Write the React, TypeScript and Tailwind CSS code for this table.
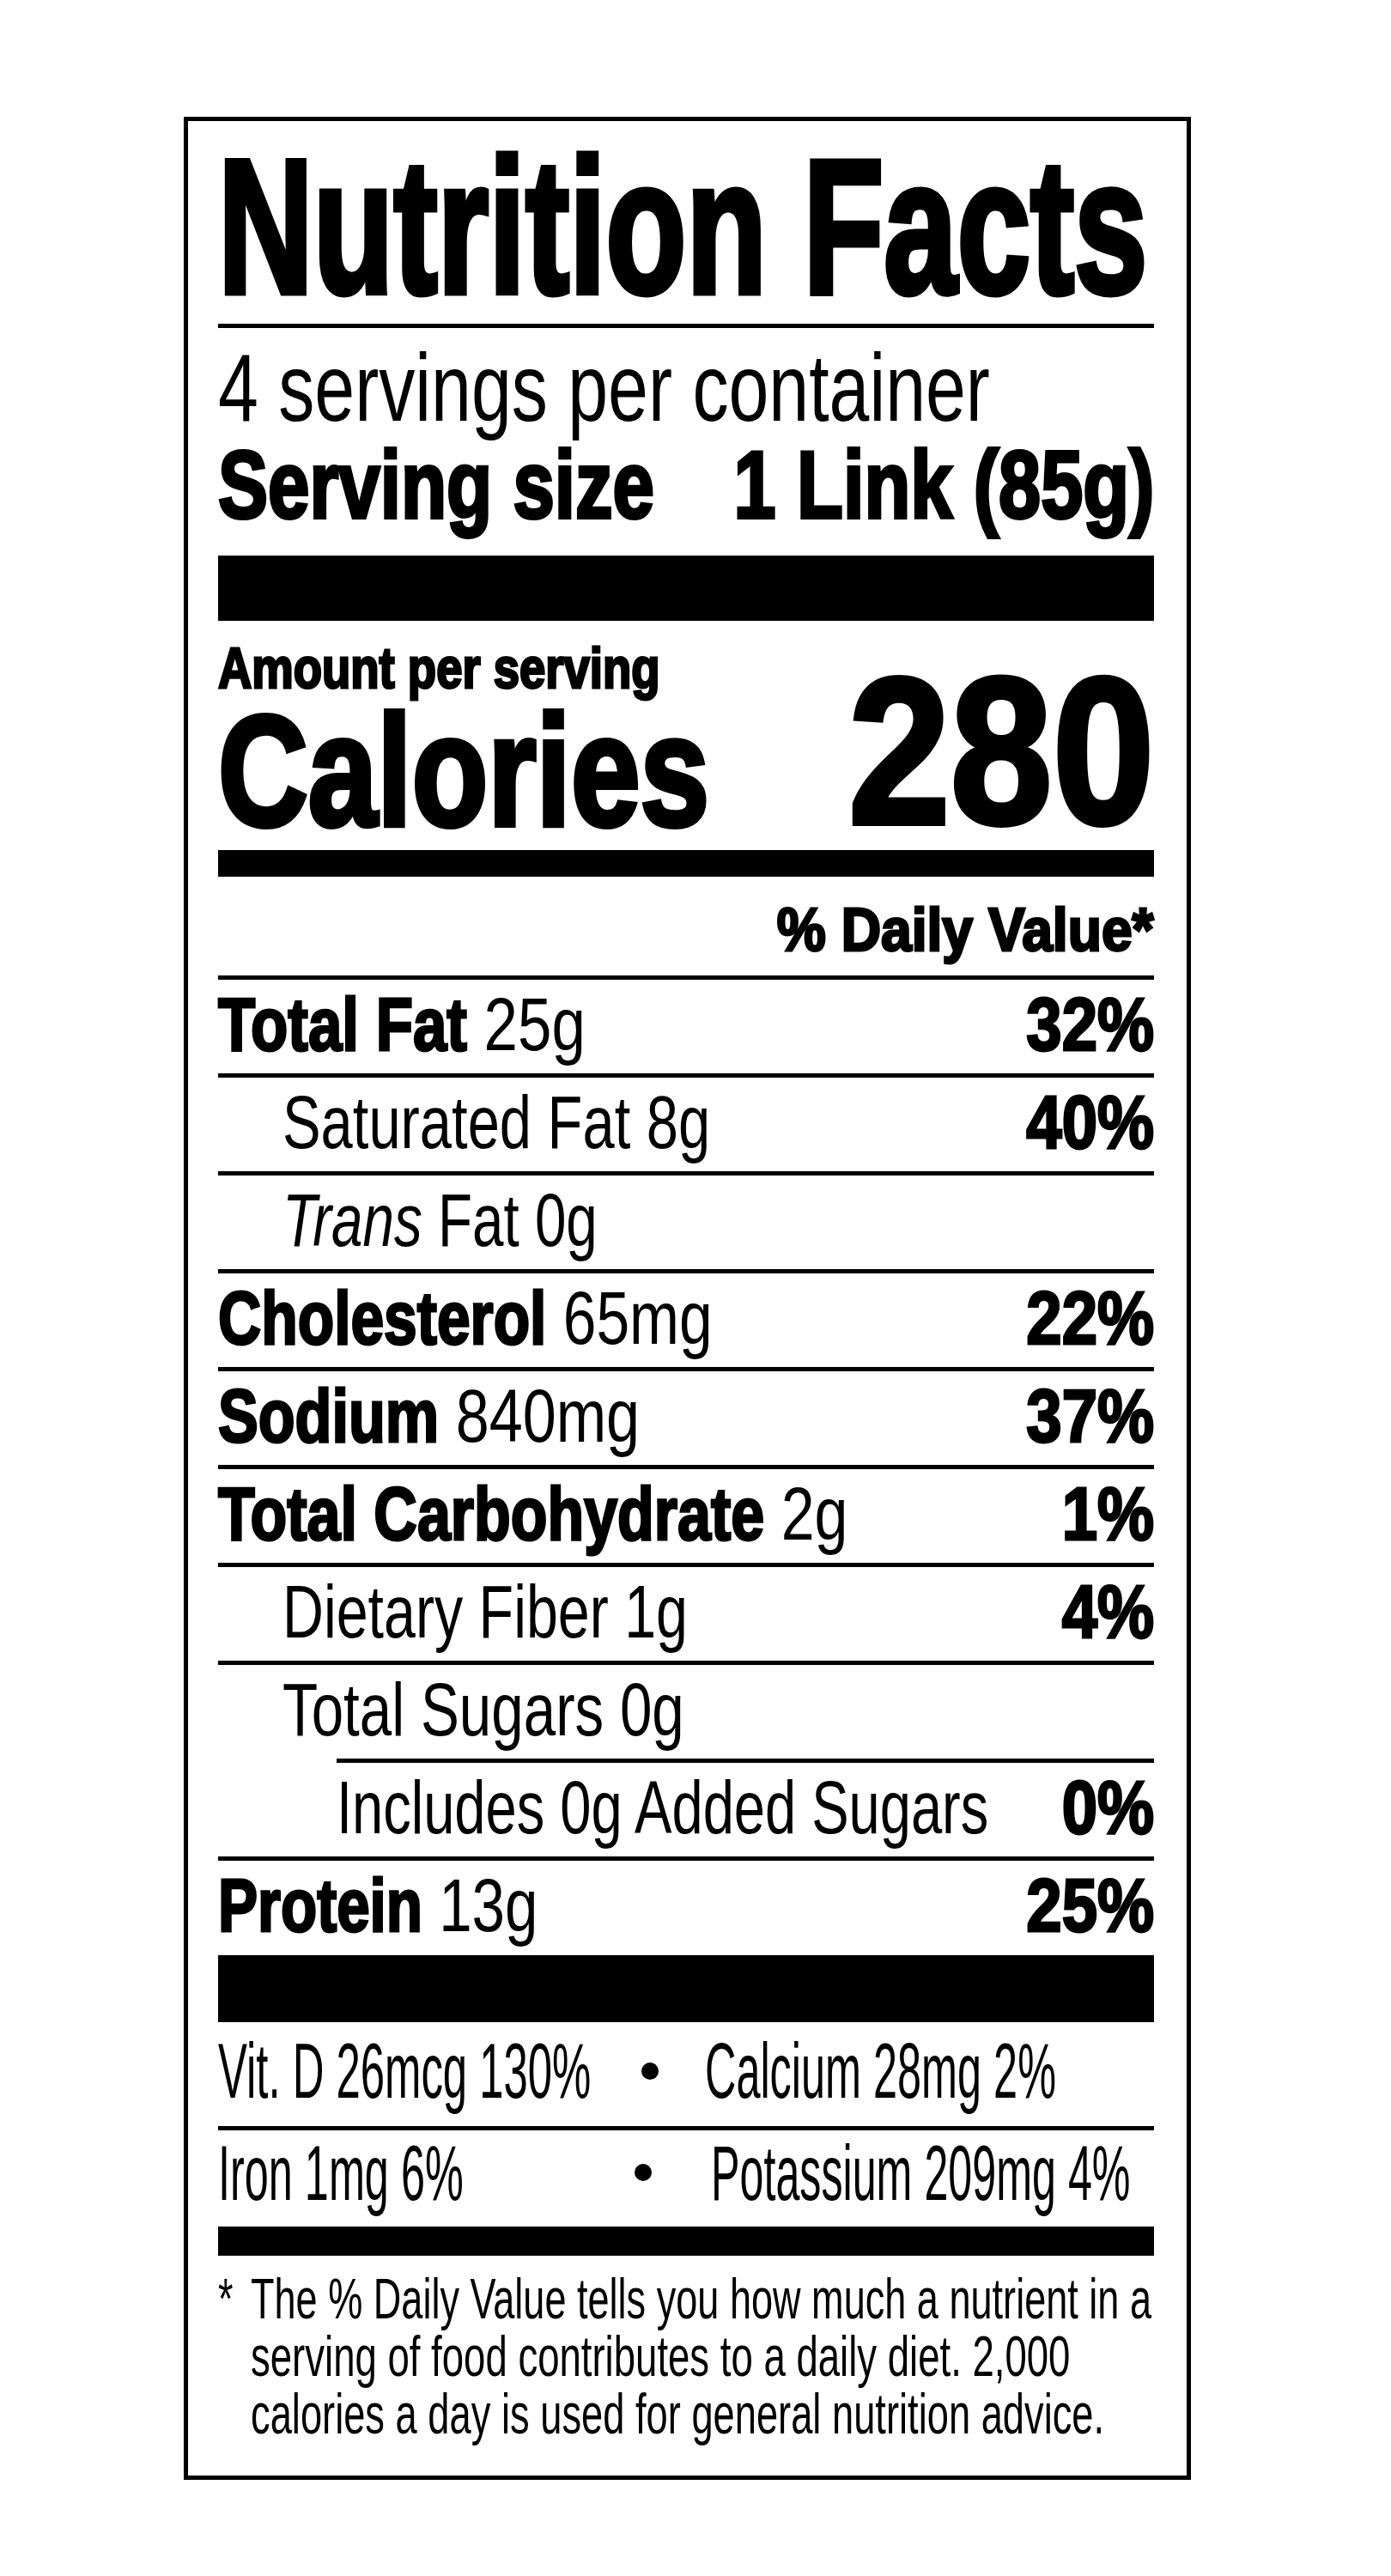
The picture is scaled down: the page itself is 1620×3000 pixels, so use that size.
import React from "react";

type RowProps = {
  children: React.ReactNode;
  pct?: string;
  ruleClass?: string;
  padClass?: string;
  scaleClass: string;
  bottomClass?: string;
};

function Row({ children, pct, ruleClass = "", padClass = "", scaleClass, bottomClass = "pb-[6px]" }: RowProps) {
  return (
    <div>
      <div className={"h-[5px] bg-black " + ruleClass} />
      <div className={"flex text-[88px] leading-[103px] " + bottomClass}>
        <div className={"flex-1 min-w-0 whitespace-nowrap " + padClass}>
          <span className={"inline-block origin-left " + scaleClass}>{children}</span>
        </div>
        {pct && (
          <div className="shrink-0 whitespace-nowrap">
            <span className="inline-block origin-right scale-x-[0.845] font-bold [-webkit-text-stroke:3px_black]">
              {pct}
            </span>
          </div>
        )}
      </div>
    </div>
  );
}

function B({ children }: { children: React.ReactNode }) {
  return <b className="font-bold [-webkit-text-stroke:3px_black]">{children}</b>;
}

export default function App() {
  return (
    <div className="w-[1620px] min-h-[3000px] overflow-hidden bg-white pt-[136px] pl-[214px] text-black [font-family:'Liberation_Sans',Arial,sans-serif]">
      <div className="w-[1173px] border-[5px] border-black pl-[35px] pr-[38px] pb-[38px]">
        {/* Title */}
        <h1 className="pt-[10px] text-[222px] leading-[226px] font-bold whitespace-nowrap">
          <span className="inline-block origin-left scale-x-[0.691] [-webkit-text-stroke:7px_black]">Nutrition Facts</span>
        </h1>
        <div className="h-[5px] bg-black" />

        {/* Servings */}
        <div className="pt-[13px] text-[112px] leading-[113px] whitespace-nowrap">
          <div>
            <span className="inline-block origin-left scale-x-[0.752]">4 servings per container</span>
          </div>
          <div className="flex font-bold">
            <div className="flex-1 min-w-0">
              <span className="inline-block origin-left scale-x-[0.777] [-webkit-text-stroke:4px_black]">Serving size</span>
            </div>
            <div className="shrink-0">
              <span className="inline-block origin-right scale-x-[0.787] [-webkit-text-stroke:4px_black]">1 Link (85g)</span>
            </div>
          </div>
        </div>
        <div className="mt-[26px] h-[76px] bg-black" />

        {/* Calories */}
        <div className="flex items-end pt-[20px] font-bold whitespace-nowrap">
          <div className="flex-1 min-w-0">
            <div className="text-[67px] leading-[70px]">
              <span className="inline-block origin-left scale-x-[0.813] [-webkit-text-stroke:3px_black]">Amount per serving</span>
            </div>
            <div className="text-[184px] leading-[168px]">
              <span className="inline-block origin-left scale-x-[0.788] [-webkit-text-stroke:6px_black]">Calories</span>
            </div>
          </div>
          <div className="shrink-0 text-[243px] leading-[213px]">
            <span className="inline-block origin-right scale-x-[0.879] [-webkit-text-stroke:6px_black]">280</span>
          </div>
        </div>
        <div className="mt-[9px] h-[31px] bg-black" />

        {/* % Daily Value */}
        <div className="flex justify-end pt-[22px] pb-[13px] text-[70px] leading-[80px] font-bold whitespace-nowrap">
          <span className="inline-block origin-right scale-x-[0.917] [-webkit-text-stroke:3px_black]">% Daily Value*</span>
        </div>

        {/* Nutrient rows */}
        <Row pct="32%" scaleClass="scale-x-[0.805]">
          <B>Total Fat</B> 25g
        </Row>
        <Row pct="40%" padClass="pl-[75px]" scaleClass="scale-x-[0.76]">
          Saturated Fat 8g
        </Row>
        <Row padClass="pl-[75px]" scaleClass="scale-x-[0.745]">
          <i>Trans</i> Fat 0g
        </Row>
        <Row pct="22%" scaleClass="scale-x-[0.79]">
          <B>Cholesterol</B> 65mg
        </Row>
        <Row pct="37%" scaleClass="scale-x-[0.797]">
          <B>Sodium</B> 840mg
        </Row>
        <Row pct="1%" scaleClass="scale-x-[0.795]">
          <B>Total Carbohydrate</B> 2g
        </Row>
        <Row pct="4%" padClass="pl-[75px]" scaleClass="scale-x-[0.754]">
          Dietary Fiber 1g
        </Row>
        <Row padClass="pl-[75px]" scaleClass="scale-x-[0.765]">
          Total Sugars 0g
        </Row>
        <Row pct="0%" ruleClass="ml-[138px]" padClass="pl-[138px]" scaleClass="scale-x-[0.739]">
          Includes 0g Added Sugars
        </Row>
        <Row pct="25%" scaleClass="scale-x-[0.785]" bottomClass="pb-[7px]">
          <B>Protein</B> 13g
        </Row>
        <div className="h-[78px] bg-black" />

        {/* Vitamins */}
        <div className="flex pb-[7px] text-[90px] leading-[114px] whitespace-nowrap">
          <div className="w-[493px] shrink-0">
            <span className="inline-block origin-left scale-x-[0.565]">Vit. D 26mcg 130%</span>
          </div>
          <div className="mt-[47px] h-[20px] w-[20px] shrink-0 self-start rounded-full bg-black" />
          <div className="ml-[54px] min-w-0 flex-1">
            <span className="inline-block origin-left scale-x-[0.56]">Calcium 28mg 2%</span>
          </div>
        </div>
        <div className="h-[5px] bg-black" />
        <div className="flex text-[90px] leading-[100px] whitespace-nowrap">
          <div className="w-[485px] shrink-0">
            <span className="inline-block origin-left scale-x-[0.56]">Iron 1mg 6%</span>
          </div>
          <div className="mt-[39px] h-[20px] w-[20px] shrink-0 self-start rounded-full bg-black" />
          <div className="ml-[69px] min-w-0 flex-1">
            <span className="inline-block origin-left scale-x-[0.558]">Potassium 209mg 4%</span>
          </div>
        </div>
        <div className="mt-[12px] h-[34px] bg-black" />

        {/* Footnote */}
        <div className="flex pt-[17px] text-[66px] leading-[67px] whitespace-nowrap">
          <div className="w-[38px] shrink-0">
            <span className="inline-block origin-left scale-x-[0.68]">*</span>
          </div>
          <div className="min-w-0 flex-1">
            <div>
              <span className="inline-block origin-left scale-x-[0.683]">The % Daily Value tells you how much a nutrient in a</span>
            </div>
            <div>
              <span className="inline-block origin-left scale-x-[0.69]">serving of food contributes to a daily diet. 2,000</span>
            </div>
            <div>
              <span className="inline-block origin-left scale-x-[0.686]">calories a day is used for general nutrition advice.</span>
            </div>
          </div>
        </div>
      </div>
    </div>
  );
}
